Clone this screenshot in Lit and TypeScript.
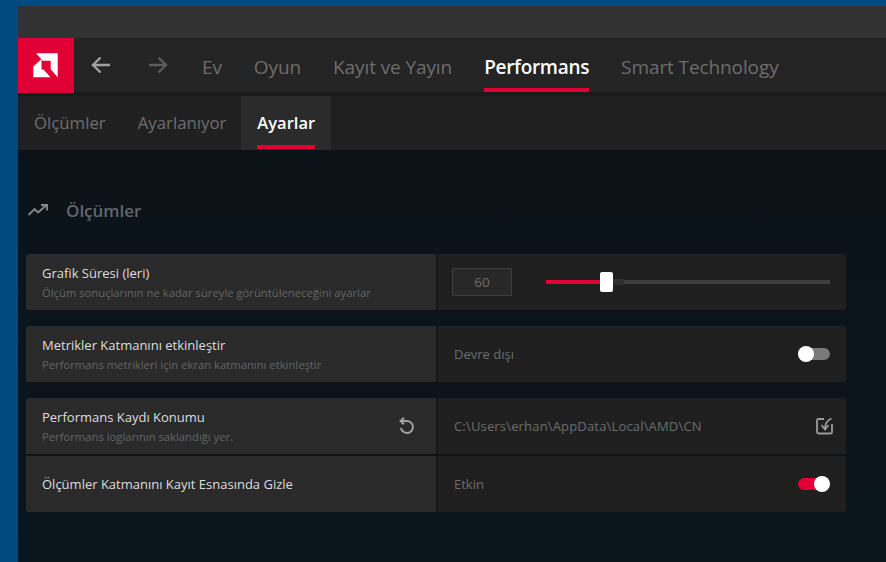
import { LitElement, html, css } from 'lit';
import { customElement } from 'lit/decorators.js';

const NAV = ['Ev', 'Oyun', 'Kayıt ve Yayın', 'Performans', 'Smart Technology'];
const SUB = ['Ölçümler', 'Ayarlanıyor', 'Ayarlar'];

@customElement('app-root')
export class AppRoot extends LitElement {
  static styles = css`
    :host {
      display: block;
      width: 886px;
      height: 562px;
      box-sizing: border-box;
      padding: 6px 0 0 18px;
      background: #004a80;
      font-family: 'Open Sans', 'Noto Sans', sans-serif;
      overflow: hidden;
    }
    .window {
      height: 556px;
      display: flex;
      flex-direction: column;
      background: linear-gradient(180deg, #0b1218 0%, #0b151c 100%);
    }
    .title {
      height: 32px;
      flex: none;
      background: #323232;
    }
    .nav {
      height: 54px;
      flex: none;
      display: flex;
      align-items: stretch;
      background: #242424;
    }
    .logo {
      width: 56px;
      height: 55px;
      flex: none;
      background: #e00036;
      display: flex;
      align-items: center;
      justify-content: center;
      position: relative;
      z-index: 1;
    }
    .arrows {
      display: flex;
      align-items: center;
      gap: 37px;
      margin: 0 34px 0 17px;
    }
    .links {
      display: flex;
      gap: 32px;
    }
    .link {
      display: flex;
      align-items: center;
      box-sizing: border-box;
      height: 54px;
      padding-top: 8px;
      font-size: 19px;
      letter-spacing: -0.1px;
      color: #6d6d6d;
      border-bottom: 4px solid transparent;
    }
    .link.on {
      color: #fff;
      font-weight: 600;
      letter-spacing: -0.3px;
      border-bottom-color: #e00036;
    }
    .sub {
      height: 58px;
      flex: none;
      box-sizing: border-box;
      display: flex;
      background: #202020;
      border-top: 4px solid #1a1a1a;
    }
    .tab {
      padding: 0 16px 2px;
      display: flex;
      flex-direction: column;
      justify-content: center;
      position: relative;
      font-size: 16.8px;
      color: #6e6e6e;
    }
    .tab.on {
      background: #2b2b2b;
      color: #fff;
      font-weight: 600;
      font-size: 16.5px;
      margin-left: -1px;
    }
    .tab.on::after {
      content: '';
      position: absolute;
      left: 16px;
      right: 16px;
      bottom: 1px;
      height: 4px;
      background: #e00036;
    }
    .head {
      display: flex;
      align-items: center;
      gap: 18px;
      margin: 49px 0 0 10px;
      height: 22px;
      font-size: 17px;
      font-weight: 600;
      color: #636669;
    }
    .rows {
      width: 820px;
      margin: 33px 0 0 8px;
      display: flex;
      flex-direction: column;
    }
    .row {
      height: 56px;
      display: flex;
      background: #171717;
      border-radius: 3px;
      overflow: hidden;
      margin-bottom: 16px;
    }
    .row.top {
      margin-bottom: 2px;
      border-radius: 3px 3px 0 0;
    }
    .row.bottom {
      border-radius: 0 0 3px 3px;
    }
    .label {
      width: 410px;
      flex: none;
      box-sizing: border-box;
      padding: 0 21px 0 16px;
      background: #2a2a2a;
      margin-right: 2px;
      display: flex;
      align-items: center;
      justify-content: space-between;
    }
    .name {
      font-size: 13px;
      line-height: 18px;
      color: #dedede;
    }
    .desc {
      font-size: 11.25px;
      line-height: 14px;
      margin-top: 4px;
      color: #646464;
    }
    .value {
      flex: 1;
      display: flex;
      align-items: center;
      justify-content: space-between;
      padding: 0 16px;
      background: #1f1f1f;
      font-size: 13px;
      color: #6c6c6c;
    }
    .path {
      letter-spacing: 0.17px;
    }
    .num {
      width: 60px;
      height: 28px;
      flex: none;
      box-sizing: border-box;
      border: 1px solid #3d3d3d;
      background: #282828;
      display: flex;
      align-items: center;
      justify-content: center;
      font-size: 13.5px;
      margin-left: -2px;
    }
    .track {
      width: 284px;
      height: 4px;
      flex: none;
      background: #3e3e3e;
      position: relative;
    }
    .fill {
      width: 56px;
      height: 4px;
      background: #e00036;
    }
    .thumb {
      position: absolute;
      left: 54px;
      top: -8px;
      width: 13px;
      height: 20px;
      border-radius: 2px;
      background: #fff;
    }
    .shade {
      position: absolute;
      left: 62px;
      top: -1px;
      width: 16px;
      height: 6px;
      background: #2f2f2f;
    }
    .toggle {
      width: 32px;
      height: 12px;
      border-radius: 6px;
      background: #7a7a7a;
      position: relative;
    }
    .toggle.on {
      background: #e00036;
    }
    .knob {
      position: absolute;
      top: -2px;
      left: 0;
      width: 16px;
      height: 16px;
      border-radius: 50%;
      background: #fff;
    }
    .toggle.on .knob {
      left: 16px;
    }
    .icon {
      display: block;
    }
    .browse {
      margin-right: -4px;
    }
  `;

  private renderToggle(on: boolean) {
    return html`<div class="toggle ${on ? 'on' : ''}"><div class="knob"></div></div>`;
  }

  render() {
    return html`
      <div class="window">
        <div class="title"></div>
        <div class="nav">
          <div class="logo">
            <svg class="icon" width="26" height="26" viewBox="0 0 26 26" fill="#fff">
              <path d="M3 .3H24.7V24.3L17.7 16.3V7.7H9.7Z" />
              <path d="M.3 13.5L8.5 6V16.5H10.5L17.5 24.3H.3Z" />
            </svg>
          </div>
          <div class="arrows">
            <svg class="icon" width="20" height="18" viewBox="0 0 20 18" fill="none" stroke="#a0a0a0" stroke-width="2.4">
              <path d="M19 9H2M9.5 1.5L2 9L9.5 16.5" />
            </svg>
            <svg class="icon" width="20" height="18" viewBox="0 0 20 18" fill="none" stroke="#5c5c5c" stroke-width="2.4">
              <path d="M1 9H18M10.5 1.5L18 9L10.5 16.5" />
            </svg>
          </div>
          <div class="links">
            ${NAV.map(
              (n) => html`<div class="link ${n === 'Performans' ? 'on' : ''}">${n}</div>`
            )}
          </div>
        </div>
        <div class="sub">
          ${SUB.map((s) => html`<div class="tab ${s === 'Ayarlar' ? 'on' : ''}">${s}</div>`)}
        </div>
        <div class="head">
          <svg class="icon" width="20" height="12" viewBox="0 0 20 12" fill="none" stroke="#8a8a8a" stroke-width="1.8">
            <path d="M0.5 11L6.5 5L10 8.5L18 1.5M13 1H19V6.5" />
          </svg>
          <span>Ölçümler</span>
        </div>
        <div class="rows">
          <div class="row">
            <div class="label">
              <div>
                <div class="name">Grafik Süresi (leri)</div>
                <div class="desc">Ölçüm sonuçlarının ne kadar süreyle görüntüleneceğini ayarlar</div>
              </div>
            </div>
            <div class="value">
              <div class="num">60</div>
              <div class="track">
                <div class="fill"></div>
                <div class="shade"></div>
                <div class="thumb"></div>
              </div>
            </div>
          </div>
          <div class="row">
            <div class="label">
              <div>
                <div class="name">Metrikler Katmanını etkinleştir</div>
                <div class="desc">Performans metrikleri için ekran katmanını etkinleştir</div>
              </div>
            </div>
            <div class="value">
              <span>Devre dışı</span>
              ${this.renderToggle(false)}
            </div>
          </div>
          <div class="row top">
            <div class="label">
              <div>
                <div class="name">Performans Kaydı Konumu</div>
                <div class="desc">Performans loglarının saklandığı yer.</div>
              </div>
              <svg class="icon" width="16" height="18" viewBox="0 0 16 18" fill="none" stroke="#a0a0a0" stroke-width="2">
                <path d="M5 .8L1.6 4L5 7.2M1.8 4H7.7A6 6 0 1 1 2 11" />
              </svg>
            </div>
            <div class="value">
              <span class="path">C:\\Users\\erhan\\AppData\\Local\\AMD\\CN</span>
              <svg class="icon browse" width="18" height="18" viewBox="0 0 18 18" fill="none" stroke="#9a9a9a" stroke-width="1.8">
                <path d="M8 2H2.5A1.5 1.5 0 0 0 1 3.5V15A1.5 1.5 0 0 0 2.5 16.5H14.5A1.5 1.5 0 0 0 16 15V7" />
                <path d="M15.5 1.5Q9 4 9 12M5.5 8L9 12.5L12.5 8" />
              </svg>
            </div>
          </div>
          <div class="row bottom">
            <div class="label">
              <div class="name">Ölçümler Katmanını Kayıt Esnasında Gizle</div>
            </div>
            <div class="value">
              <span>Etkin</span>
              ${this.renderToggle(true)}
            </div>
          </div>
        </div>
      </div>
    `;
  }
}
